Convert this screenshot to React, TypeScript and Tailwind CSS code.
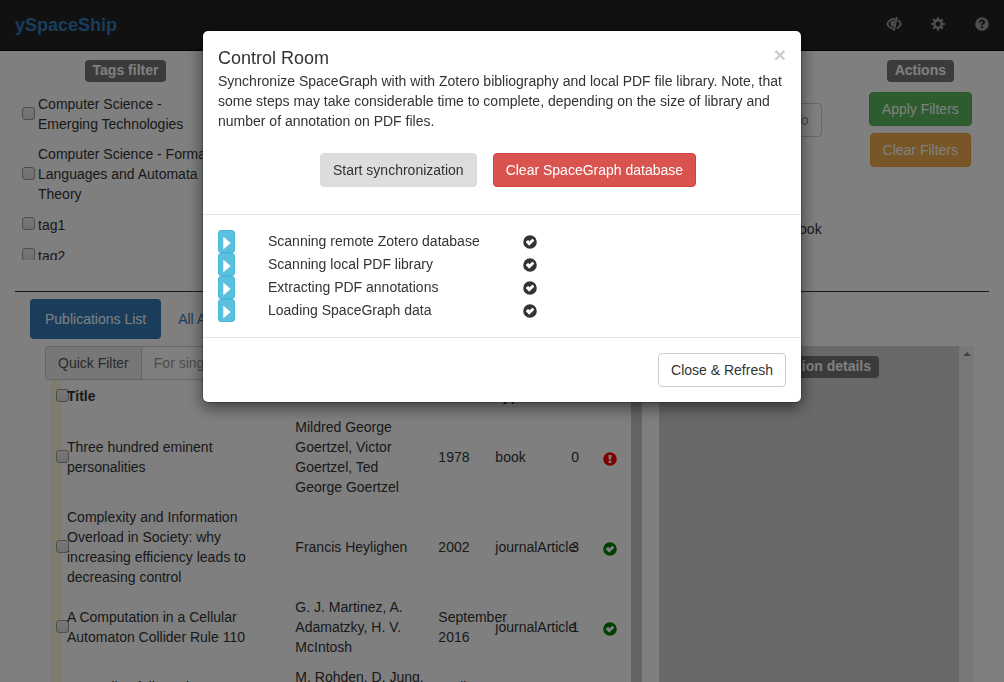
import React from "react";

type Row = {
  title: string;
  authors: string;
  year: string;
  type: string;
  count: number;
  ok: boolean;
};

const tags = [
  "Computer Science - Emerging Technologies",
  "Computer Science - Formal Languages and Automata Theory",
  "tag1",
  "tag2",
];

const rows: Row[] = [
  {
    title: "Three hundred eminent personalities",
    authors: "Mildred George Goertzel, Victor Goertzel, Ted George Goertzel",
    year: "1978",
    type: "book",
    count: 0,
    ok: false,
  },
  {
    title:
      "Complexity and Information Overload in Society: why increasing efficiency leads to decreasing control",
    authors: "Francis Heylighen",
    year: "2002",
    type: "journalArticle",
    count: 3,
    ok: true,
  },
  {
    title: "A Computation in a Cellular Automaton Collider Rule 110",
    authors: "G. J. Martinez, A. Adamatzky, H. V. McIntosh",
    year: "September 2016",
    type: "journalArticle",
    count: 1,
    ok: true,
  },
  {
    title: "Cascading failures in AC electricity grids",
    authors: "M. Rohden, D. Jung, S. Tamrakar, S. Kettemann",
    year: "April 2016",
    type: "journalArticle",
    count: 2,
    ok: true,
  },
];

const steps = [
  "Scanning remote Zotero database",
  "Scanning local PDF library",
  "Extracting PDF annotations",
  "Loading SpaceGraph data",
];

function OkSign({ className }: { className: string }) {
  return (
    <svg viewBox="0 0 14 14" width="14" height="14" className={className} aria-hidden="true">
      <path
        fill="currentColor"
        fillRule="evenodd"
        d="M7 .2a6.8 6.8 0 1 1 0 13.6A6.8 6.8 0 0 1 7 .2ZM3.1 7.400 5.700 10.200a.7.7 0 0 0 1 0L11 6a.6.6 0 0 0 0-.8L9.800 4a.6.6 0 0 0-.8 0L6.600 6.200 5.500 5.300a.6.6 0 0 0-.8 0L3.100 6.600a.6.6 0 0 0 0 .8Z"
      />
    </svg>
  );
}

function AlertSign({ className }: { className: string }) {
  return (
    <svg viewBox="0 0 14 14" width="14" height="14" className={className} aria-hidden="true">
      <path
        fill="currentColor"
        fillRule="evenodd"
        d="M7 .2a6.8 6.8 0 1 1 0 13.6A6.8 6.8 0 0 1 7 .2ZM5.3 3 5.900 7.800h2.200L8.700 3ZM5.600 8.700v2.400h2.800V8.700Z"
      />
    </svg>
  );
}

function EyeCloseIcon() {
  return (
    <svg viewBox="0 0 16 14" width="16" height="14" aria-hidden="true" fill="none" stroke="currentColor">
      <path d="M9.200 2C5.300 1.800 2.300 4.200 1.200 7c.9 2.100 2.900 4.100 6 4.800" strokeWidth="1.800" />
      <path d="M10.800.2 7.900 13.800" strokeWidth="1.800" />
      <path d="M11.900 2.900C13.400 3.900 14.400 5.500 14.800 7c-.6 1.700-1.900 3.400-4 4.400" strokeWidth="1.800" />
      <path d="M9 3.600 7.600 9.900C4.900 9.500 3.900 7 4.900 4.400Z" fill="currentColor" stroke="none" />
    </svg>
  );
}

function CogIcon() {
  return (
    <svg viewBox="0 0 14 14" width="14" height="14" aria-hidden="true" fill="none" stroke="currentColor">
      <circle cx="7" cy="7" r="3.700" strokeWidth="2.400" />
      <path
        d="M7 .2v2.600M7 11.200v2.600M.2 7h2.600M11.200 7h2.600M2.200 2.200 4 4M10 10l1.800 1.800M2.200 11.800 4 10M10 4l1.800-1.800"
        strokeWidth="2.200"
      />
    </svg>
  );
}

function QuestionIcon() {
  return (
    <svg viewBox="0 0 14 14" width="14" height="14" aria-hidden="true">
      <path
        fill="currentColor"
        fillRule="evenodd"
        d="M7 .2a6.8 6.8 0 1 1 0 13.6A6.800 6.800 0 0 1 7 .2ZM3.900 5.400H6c0-.7.3-1.100 1-1.100.6 0 1 .3 1 .8 0 .4-.2.6-.7.9-.9.5-1.300 1-1.300 2.100h2c0-.5.2-.7.8-1.100.9-.5 1.400-1.100 1.400-2.100 0-1.600-1.300-2.500-3.100-2.500-2 0-3.200 1.100-3.200 3ZM6 9v2h2.100V9Z"
      />
    </svg>
  );
}

function Check({ label, id }: { label?: string; id?: string }) {
  return (
    <input
      type="checkbox"
      id={id}
      aria-label={label}
      className="-mt-0.5 block size-[13px] shrink-0 appearance-none rounded-[3px] border border-[#9b9b9b] bg-linear-to-b from-[#f0f0f0] to-[#dedede]"
    />
  );
}

function Badge({ children }: { children: React.ReactNode }) {
  return (
    <span className="inline-block rounded bg-[#777777] px-2 pb-0.5 leading-5 font-bold whitespace-nowrap text-white">
      {children}
    </span>
  );
}

function Navbar() {
  return (
    <nav className="flex h-[51px] items-center justify-between border-b border-[#080808] bg-[#222222] px-[15px]">
      <a href="#home" className="text-lg font-bold text-[#337ab7]">
        ySpaceShip
      </a>
      <div className="flex items-center gap-[30px] pb-0.5 text-[#9d9d9d]">
        <button type="button" aria-label="Toggle view" className="-mr-px">
          <EyeCloseIcon />
        </button>
        <button type="button" aria-label="Settings">
          <CogIcon />
        </button>
        <button type="button" aria-label="Help">
          <QuestionIcon />
        </button>
      </div>
    </nav>
  );
}

function Filters() {
  return (
    <section className="grid grid-cols-12 pt-[9px] pb-[31px]">
      <div className="col-span-3 px-[15px]">
        <div className="text-center">
          <Badge>Tags filter</Badge>
        </div>
        <ul className="mt-3 flex h-[166px] flex-col gap-[10px] overflow-hidden pr-5 pl-[7px]">
          {tags.map((tag, i) => (
            <li key={tag} className="flex min-h-[21px] shrink-0 items-center gap-[3px]">
              <Check id={`tag-${i}`} />
              <label htmlFor={`tag-${i}`}>{tag}</label>
            </li>
          ))}
        </ul>
      </div>
      <div className="col-span-7 flex flex-col items-end px-[15px]">
        <input
          aria-label="Year to"
          placeholder="To"
          className="mt-[43px] h-[34px] w-1/3 rounded border border-[#cccccc] px-3 text-right placeholder:text-[#999999]"
        />
        <label className="mt-[82px] flex items-center gap-1">
          <Check />
          book
        </label>
      </div>
      <div className="col-span-2 flex flex-col items-center">
        <Badge>Actions</Badge>
        <button
          type="button"
          className="mt-[10px] rounded border border-[#4cae4c] bg-[#5cb85c] px-3 py-[6px] leading-5 text-white"
        >
          Apply Filters
        </button>
        <button
          type="button"
          className="mt-[7px] rounded border border-[#eea236] bg-[#f0ad4e] px-3 py-[6px] leading-5 text-white"
        >
          Clear Filters
        </button>
      </div>
    </section>
  );
}

function PublicationTable() {
  return (
    <table className="w-full table-fixed">
      <colgroup>
        <col className="w-3" />
        <col />
        <col className="w-[143px]" />
        <col className="w-[57px]" />
        <col className="w-[76px]" />
        <col className="w-8" />
        <col className="w-[13px]" />
      </colgroup>
      <thead>
        <tr className="h-8 text-left">
          <th className="pl-px">
            <Check label="Select all" />
          </th>
          <th>Title</th>
          <th>Authors</th>
          <th>Year</th>
          <th>Type</th>
          <th />
          <th />
        </tr>
      </thead>
      <tbody>
        {rows.map((row) => (
          <tr key={row.title}>
            <td className="pl-px">
              <Check label={`Select ${row.title}`} />
            </td>
            <td className="py-[5px] pr-[15px]">{row.title}</td>
            <td className="py-[5px] pr-3">{row.authors}</td>
            <td className="py-[5px]">{row.year}</td>
            <td className="py-[5px]">{row.type}</td>
            <td className="py-[5px]">{row.count}</td>
            <td className="pt-[3px]">
              {row.ok ? (
                <OkSign className="max-w-none text-[#008000]" />
              ) : (
                <AlertSign className="max-w-none text-[#ff0000]" />
              )}
            </td>
          </tr>
        ))}
      </tbody>
    </table>
  );
}

function Publications() {
  return (
    <section className="flex min-h-0 flex-1 flex-col px-[30px] pt-[7px]">
      <div className="flex gap-[2px]">
        <a href="#publications" className="rounded bg-[#337ab7] px-[15px] py-[10px] text-white">
          Publications List
        </a>
        <a href="#annotations" className="rounded px-[15px] py-[10px] text-[#337ab7]">
          All Annotations
        </a>
      </div>
      <div className="mt-[7px] flex min-h-0 flex-1">
        <div className="flex min-w-0 flex-1 flex-col px-[15px]">
          <div className="flex">
            <label
              htmlFor="quick-filter"
              className="rounded-l border border-[#cccccc] bg-[#eeeeee] px-3 py-[6px] whitespace-nowrap text-[#555555]"
            >
              Quick Filter
            </label>
            <input
              id="quick-filter"
              placeholder="For single keyword"
              className="h-[34px] min-w-0 flex-1 rounded-r border border-l-0 border-[#cccccc] px-3 placeholder:text-[#999999]"
            />
          </div>
          <div className="flex min-h-0 flex-1 pl-[6px]">
            <div className="w-[11px] shrink-0 bg-[#fff8dc]" />
            <div className="-ml-[7px] min-w-0 flex-1">
              <PublicationTable />
            </div>
          </div>
        </div>
        <div className="mr-[17px] w-[11px] shrink-0 bg-[#c8c8c8]" />
        <aside className="flex w-1/3 bg-[#d3d3d3]">
          <div className="flex-1 pt-[10px] text-center">
            <Badge>Publication details</Badge>
          </div>
          <div className="flex w-[15px] justify-center bg-[#f1f1f1] pt-[6px]">
            <svg viewBox="0 0 8 4" width="8" height="4" aria-hidden="true">
              <path d="M4 0 8 4H0Z" fill="#8a8a8a" />
            </svg>
          </div>
        </aside>
      </div>
    </section>
  );
}

function ControlRoom() {
  return (
    <div className="fixed inset-0 flex items-start justify-center bg-black/50 pt-[30px]">
      <div
        role="dialog"
        aria-modal="true"
        aria-labelledby="control-room"
        className="w-[600px] max-w-full rounded-md border border-black/20 bg-white bg-clip-padding shadow-[0_5px_15px_rgba(0,0,0,0.5)]"
      >
        <header className="border-b border-[#e5e5e5] px-[15px] pt-[14px] pb-[27px]">
          <div className="flex items-start justify-between">
            <h4 id="control-room" className="text-lg leading-[26px]">
              Control Room
            </h4>
            <button type="button" aria-label="Close" className="text-[21px] leading-5 font-bold text-[#cccccc]">
              ×
            </button>
          </div>
          <p>
            Synchronize SpaceGraph with with Zotero bibliography and local PDF file library. Note, that some steps may
            take considerable time to complete, depending on the size of library and number of annotation on PDF files.
          </p>
          <div className="mt-[22px] flex justify-center gap-4 pl-3">
            <button type="button" className="rounded border border-[#dadada] bg-[#dddddd] px-3 py-[6px] leading-5">
              Start synchronization
            </button>
            <button
              type="button"
              className="rounded border border-[#d43f3a] bg-[#d9534f] px-3 py-[6px] leading-5 text-white"
            >
              Clear SpaceGraph database
            </button>
          </div>
        </header>
        <ul className="p-[15px]">
          {steps.map((step) => (
            <li key={step} className="flex h-[23px] items-center">
              <button
                type="button"
                aria-label={`Run: ${step}`}
                className="flex h-[23px] w-[17px] items-center justify-center rounded-[3px] border border-[#46b8da] bg-[#5bc0de]"
              >
                <svg viewBox="0 0 8 14" width="8" height="14" aria-hidden="true" className="mt-0.5">
                  <path d="M.3 1.200v11.600q0 .6.5.1L7.300 7.300q.3-.3 0-.6L.8 1.100Q.3.6.3 1.200Z" fill="#ffffff" />
                </svg>
              </button>
              <span className="ml-[33px] w-[255px] pb-0.5">{step}</span>
              <OkSign className="text-[#333333]" />
            </li>
          ))}
        </ul>
        <footer className="flex justify-end border-t border-[#e5e5e5] p-[15px]">
          <button type="button" className="rounded border border-[#cccccc] bg-white px-3 py-[6px] leading-5">
            Close &amp; Refresh
          </button>
        </footer>
      </div>
    </div>
  );
}

export default function App() {
  return (
    <div className="flex h-screen flex-col overflow-hidden bg-white font-['Liberation_Sans',Arial,sans-serif] text-sm leading-5 text-[#333333]">
      <Navbar />
      <Filters />
      <hr className="mx-[15px] border-[#333333]" />
      <Publications />
      <ControlRoom />
    </div>
  );
}
